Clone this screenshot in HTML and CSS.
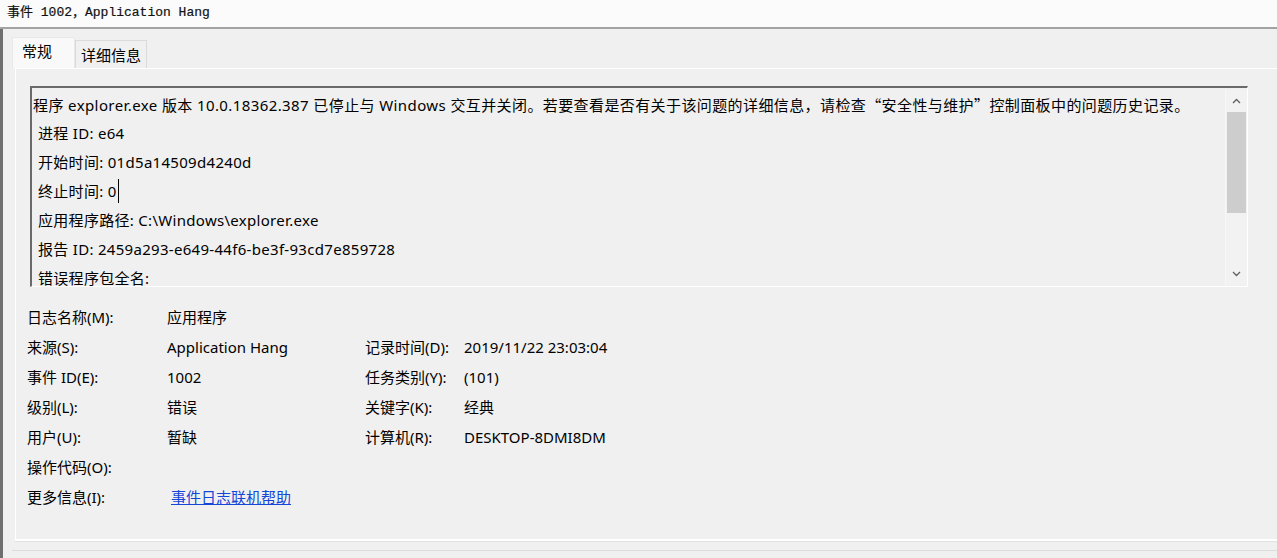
FILE: index.html
```html
<!DOCTYPE html>
<html lang="zh-CN">
<head>
  <meta charset="UTF-8">
  <title>事件 1002，Application Hang</title>
  <link rel="stylesheet" href="styles.css">
</head>
<body>
  <div class="titlebar">事件 1002，Application Hang</div>

  <div class="window">
    <div class="tabs">
      <div class="tab active">常规</div>
      <div class="tab">详细信息</div>
    </div>

    <div class="panel">
      <div class="textbox">
        <div class="textbox-lines">
          <div class="line first">程序 explorer.exe 版本 10.0.18362.387 已停止与 Windows 交互并关闭。若要查看是否有关于该问题的详细信息，请检查<span class="cjk">“</span>安全性与维护<span class="cjk">”</span>控制面板中的问题历史记录。</div>
          <div class="line indent">进程 ID: e64</div>
          <div class="line indent">开始时间: 01d5a14509d4240d</div>
          <div class="line indent">终止时间: 0<span class="caret"></span></div>
          <div class="line indent">应用程序路径: C:\Windows\explorer.exe</div>
          <div class="line indent">报告 ID: 2459a293-e649-44f6-be3f-93cd7e859728</div>
          <div class="line indent">错误程序包全名:</div>
        </div>
        <div class="scrollbar">
          <div class="arrow">
            <svg width="9" height="6" viewBox="0 0 9 6"><path d="M1 5 L4.5 1.5 L8 5" fill="none" stroke="#606060" stroke-width="1.3"/></svg>
          </div>
          <div class="thumb"></div>
          <div class="track"></div>
          <div class="arrow">
            <svg width="9" height="6" viewBox="0 0 9 6"><path d="M1 1 L4.5 4.5 L8 1" fill="none" stroke="#606060" stroke-width="1.3"/></svg>
          </div>
        </div>
      </div>

      <div class="props">
        <div class="label">日志名称(M):</div>
        <div class="value">应用程序</div>
        <div class="label"></div>
        <div class="value"></div>

        <div class="label">来源(S):</div>
        <div class="value">Application Hang</div>
        <div class="label">记录时间(D):</div>
        <div class="value">2019/11/22 23:03:04</div>

        <div class="label">事件 ID(E):</div>
        <div class="value">1002</div>
        <div class="label">任务类别(Y):</div>
        <div class="value">(101)</div>

        <div class="label">级别(L):</div>
        <div class="value">错误</div>
        <div class="label">关键字(K):</div>
        <div class="value">经典</div>

        <div class="label">用户(U):</div>
        <div class="value">暂缺</div>
        <div class="label">计算机(R):</div>
        <div class="value">DESKTOP-8DMI8DM</div>

        <div class="label">操作代码(O):</div>
        <div class="value"></div>
        <div class="label"></div>
        <div class="value"></div>

        <div class="label">更多信息(I):</div>
        <div class="value"><a href="#">事件日志联机帮助</a></div>
        <div class="label"></div>
        <div class="value"></div>
      </div>
    </div>

    <div class="statusline"></div>
  </div>
</body>
</html>
```

FILE: styles.css
```css
/* General */
body {
  margin: 0;
  background: #f0f0f0;
  color: #000;
  font-family: "Noto Sans", "Noto Sans CJK SC", sans-serif;
  font-size: 15px;
  overflow: hidden;
}

.cjk {
  font-family: "Noto Sans CJK SC", sans-serif;
}

/* Title bar */
.titlebar {
  height: 27px;
  line-height: 26px;
  padding-left: 7px;
  background: #fbfbfb;
  border-bottom: 2px solid #a3a3a3;
  font-family: "Liberation Mono", "Noto Sans CJK SC", monospace;
  font-size: 13px;
  color: #111;
  -webkit-text-stroke: 0.2px #111;
  white-space: nowrap;
}

/* Window body */
.window {
  border-left: 3px solid #6f6f6f;
  padding: 8px 0 0 9px;
  height: 521px;
}

/* Tabs */
.tabs {
  display: flex;
  align-items: flex-end;
  height: 31px;
}

.tab {
  width: 72px;
  height: 28px;
  line-height: 28px;
  padding-left: 5px;
  box-sizing: border-box;
  border: 1px solid #dadada;
  border-bottom: none;
  background: #f0f0f0;
  white-space: nowrap;
}

.tab.active {
  width: 63px;
  height: 31px;
  line-height: 27px;
  padding-left: 9px;
  background: #f9f9f9;
  border-color: #e8e8e8;
  position: relative;
  z-index: 1;
}

/* Panel */
.panel {
  margin-left: 3px;
  height: 473px;
  background: #f0f0f0;
  border-top: 1px solid #fff;
  border-left: 1px solid #fff;
  border-bottom: 2px solid #fff;
  box-shadow: 0 1px 0 #e2e2e2;
  padding: 17px 0 0 14px;
  box-sizing: border-box;
}

/* Text box */
.textbox {
  width: 1218px;
  height: 201px;
  box-sizing: border-box;
  border-top: 2px solid #6a6a6a;
  border-left: 2px solid #6a6a6a;
  border-right: 1px solid #fff;
  border-bottom: 1px solid #fff;
  display: flex;
  overflow: hidden;
}

.textbox-lines {
  flex: 1;
  padding-top: 2px;
  overflow: hidden;
  letter-spacing: 0.3px;
}

.line {
  line-height: 29px;
  height: 29px;
  padding-left: 1px;
  white-space: nowrap;
}

.line.first {
  letter-spacing: 0.4px;
}

.line.indent {
  padding-left: 6px;
}

.caret {
  display: inline-block;
  width: 1px;
  height: 24px;
  background: #000;
  vertical-align: -6px;
  margin-left: 1px;
}

/* Scrollbar */
.scrollbar {
  width: 21px;
  margin: 2px 0 1px;
  display: flex;
  flex-direction: column;
  background: #f2f2f2;
  border-left: 1px solid #f7f7f7;
}

.arrow {
  height: 22px;
  display: flex;
  align-items: center;
  justify-content: center;
}

.thumb {
  height: 101px;
  margin: 0 1px;
  background: #cdcdcd;
}

.track {
  flex: 1;
}

/* Properties */
.props {
  display: grid;
  grid-template-columns: 140px 198px 99px auto;
  grid-auto-rows: 30px;
  margin: 15px 0 0 -3px;
  line-height: 30px;
  white-space: nowrap;
}

.props a {
  color: #1446d8;
  text-decoration: underline;
  margin-left: 4px;
}

/* Bottom edge */
.statusline {
  height: 9px;
  border-bottom: 1px solid #dcdcdc;
}
```
